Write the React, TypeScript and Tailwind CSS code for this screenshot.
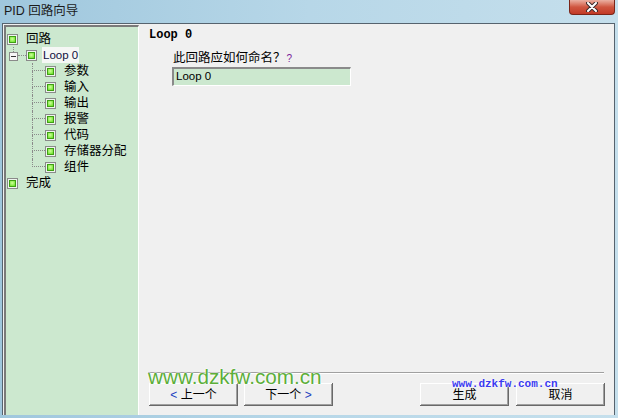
import React from 'react';

const ui = "font-['Liberation_Sans','Noto_Sans_CJK_SC',sans-serif]";

const Node = () => (
  <span className="flex h-[11px] w-[11px] shrink-0 items-center justify-center border border-[#8a8a8a] bg-[#eef5ee]">
    <span className="h-[7px] w-[7px] border border-[#3f9f14] bg-[radial-gradient(circle_at_45%_40%,#d0ff9a,#5ee01c)]" />
  </span>
);

const Button = ({ children }: { children: React.ReactNode }) => (
  <button className="flex h-[23px] w-[89px] items-center justify-center bg-[#f0f0f0] text-[12px] text-black shadow-[inset_-1px_-1px_0_#696969,inset_1px_1px_0_#ffffff,inset_-2px_-2px_0_#a0a0a0]">
    {children}
  </button>
);

const children = ['参数', '输入', '输出', '报警', '代码', '存储器分配', '组件'];

export default function App() {
  return (
    <div className={`relative flex h-[418px] w-[618px] flex-col overflow-hidden bg-gradient-to-r from-[#9fc7dd] via-[#b7d7e8] to-[#c5dfec] ${ui}`}>
      {/* Title bar */}
      <div className="flex h-[23px] shrink-0 items-start justify-between">
        <span className="pl-[4px] pt-[3px] text-[12.5px] leading-[16px] text-[#1b1b1b]">PID 回路向导</span>
        <div className="mr-[3px] flex h-[15px] w-[46px] items-center justify-center rounded-b-[4px] border border-t-0 border-[#7a2518] bg-gradient-to-b from-[#eab0a2] via-[#cf5640] to-[#c23a26]">
          <svg width="12" height="10" viewBox="0 0 12 10">
            <path d="M2 1 L10 9 M10 1 L2 9" stroke="#3b2a2a" strokeWidth="4" strokeLinecap="round" />
            <path d="M2 1 L10 9 M10 1 L2 9" stroke="#ffffff" strokeWidth="2" strokeLinecap="round" />
          </svg>
        </div>
      </div>

      {/* Client area */}
      <div className="ml-[2px] flex h-[392px] w-[613px] border border-b-0 border-[#56636e] bg-[#f0f0f0]">
        {/* Tree panel */}
        <div className="ml-[1px] mt-[1px] flex w-[135px] flex-col border-l-2 border-t-2 border-r border-l-[#7a7a7a] border-t-[#7a7a7a] border-r-white bg-[#cce8cf] pl-[1px] pt-[4px] text-[12px] text-black">
          <div className="flex h-4 items-center">
            <Node />
            <span className="ml-[8px] text-[12.5px] leading-4">回路</span>
          </div>
          <div className="flex h-4 items-center pl-[2px]">
            <div className="flex w-[9px] self-stretch flex-col items-center">
              <div className="h-[5px] w-px border-l border-dotted border-[#8a8a8a]" />
              <div className="flex h-[9px] w-[9px] items-center justify-center border border-[#8a8a8a] bg-[#f6f6f6]">
                <div className="h-px w-[5px] bg-[#333]" />
              </div>
            </div>
            <div className="h-0 w-[8px] border-t border-dotted border-[#8a8a8a]" />
            <Node />
            <span className="ml-[5px] bg-[#f5f7f5] px-[1px] text-[11.5px] leading-4 text-[#101040]">Loop 0</span>
          </div>
          {children.map((label, i) => (
            <div key={label} className="flex h-4 items-center pl-[25px]">
              <div className="flex w-[13px] self-stretch flex-col">
                <div className="h-[8px] border-b border-l border-dotted border-[#8a8a8a]" />
                {i < children.length - 1 && <div className="flex-1 border-l border-dotted border-[#8a8a8a]" />}
              </div>
              <Node />
              <span className="ml-[8px] text-[12.5px] leading-4">{label}</span>
            </div>
          ))}
          <div className="flex h-4 items-center">
            <Node />
            <span className="ml-[8px] text-[12.5px] leading-4">完成</span>
          </div>
        </div>

        {/* Right pane */}
        <div className="flex flex-1 flex-col">
          <div className="pl-[10px] pt-[4px] font-['Liberation_Mono',monospace] text-[12px] font-bold leading-[14px] text-black">
            Loop 0
          </div>
          <div className="mt-[8px] pl-[34px] text-[12.5px] leading-[16px] text-black">
            此回路应如何命名？<span className="ml-[1px] text-[10px] text-[#7a1a9a]">?</span>
          </div>
          <div className="ml-[33px] flex h-[19px] w-[179px] items-center border-l-2 border-t-2 border-r border-b border-l-[#8a8a8a] border-t-[#8a8a8a] border-r-white border-b-white bg-[#cce8cf] pl-[2px] text-[11.5px] text-black">
            Loop 0
          </div>
          <div className="flex-1" />
          <div className="ml-[9px] mr-[10px] h-[2px] border-t border-b border-t-[#a0a0a0] border-b-white" />
          <div className="mb-[9px] mt-[9px] flex pl-[10px] pr-[9px]">
            <Button><span className="text-[#2040c0]">&lt;</span>&nbsp;上一个</Button>
            <div className="w-[6px]" />
            <Button>下一个&nbsp;<span className="text-[#2040c0]">&gt;</span></Button>
            <div className="flex-1" />
            <Button>生成</Button>
            <div className="w-[7px]" />
            <Button>取消</Button>
          </div>
        </div>
      </div>

      {/* Watermarks */}
      <div className="absolute left-[148px] top-[365px] font-['Liberation_Sans',sans-serif] text-[20.7px] leading-[24px] text-[#5cae3a] [text-shadow:0_0_2px_#fff,0_0_2px_#fff,0_0_1px_#fff]">
        www.dzkfw.com.cn
      </div>
      <div className="absolute left-[452px] top-[378px] font-['Liberation_Mono',monospace] text-[11px] font-bold leading-[13px] text-[#3a3af0] [text-shadow:0_0_2px_#fff,0_0_1px_#fff]">
        www.dzkfw.com.cn
      </div>
    </div>
  );
}
